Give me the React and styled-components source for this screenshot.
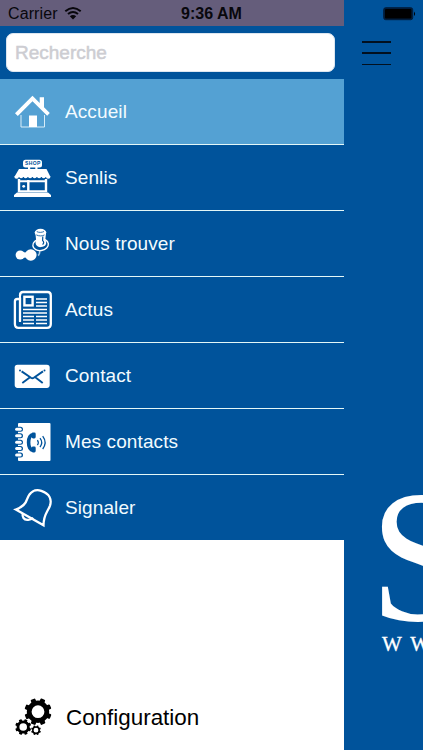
import { useState } from 'react'
import styled, { createGlobalStyle } from 'styled-components'

const GlobalStyle = createGlobalStyle`
  body {
    margin: 0;
    background: #00539b;
    font-family: "Liberation Sans", Arial, sans-serif;
  }
`

const Screen = styled.div`
  display: grid;
  grid-template-columns: 343.7px 1fr;
  height: 750px;
  overflow: hidden;
  background: #00539b;
`

const Drawer = styled.aside`
  display: flex;
  flex-direction: column;
  background: white;
`

const StatusBar = styled.div`
  display: flex;
  align-items: center;
  height: 26px;
  padding: 2px 0 0 8px;
  box-sizing: border-box;
  background: #655d7b;
  color: #08070c;
  font-size: 16px;
`

const Carrier = styled.span`
  width: 56px;
  letter-spacing: 0.1px;
`

const Wifi = styled.svg`
  width: 18px;
  height: 14px;
  margin-bottom: 2px;
`

const Time = styled.span`
  margin-left: 99px;
  font-weight: bold;
`

const SearchBox = styled.div`
  height: 53px;
  padding: 7px 8px 7px 6px;
  box-sizing: border-box;
  background: #00539b;
`

const SearchInput = styled.input`
  display: block;
  width: 329px;
  height: 39px;
  padding: 0 8px;
  box-sizing: border-box;
  border: 1px solid #dce6f0;
  border-radius: 7px;
  outline: none;
  background: white;
  font-family: inherit;
  font-size: 19px;

  &::placeholder {
    color: #cdcdd2;
    opacity: 1;
    -webkit-text-stroke: 0.5px #cdcdd2;
  }
`

const Menu = styled.nav`
  display: flex;
  flex-direction: column;
`

const MenuItem = styled.button`
  display: flex;
  align-items: center;
  height: 66px;
  padding: 0 0 0 13px;
  border: none;
  border-bottom: 1px solid #e4f7f7;
  background: ${props => props.$active ? '#54a1d3' : '#00539b'};
  color: #f2fbff;
  font-family: inherit;
  font-size: 19px;
  letter-spacing: 0.1px;
  text-align: left;
  cursor: pointer;

  &:last-child {
    height: 65px;
    border-bottom: none;
  }
`

const Icon = styled.svg`
  flex: none;
  width: 40px;
  height: 40px;
  margin-right: 12px;
`

const Settings = styled.button`
  display: flex;
  align-items: center;
  height: 66px;
  margin-top: auto;
  padding: 0 0 0 13px;
  border: none;
  background: white;
  color: black;
  font-family: inherit;
  font-size: 22.4px;
`

const SettingsLabel = styled.span`
  margin: 1px 0 0 1px;
`

const Page = styled.main`
  display: flex;
  flex-direction: column;
  overflow: hidden;
`

const PageStatus = styled.div`
  display: flex;
  height: 26px;
  padding: 7px 0 0 39.3px;
  box-sizing: border-box;
`

const Burger = styled.button`
  display: flex;
  flex-direction: column;
  justify-content: space-between;
  width: 29px;
  height: 24px;
  margin: 15px 0 0 18.3px;
  padding: 0;
  border: none;
  background: none;
`

const BurgerLine = styled.span`
  height: 1.5px;
  background: #02101f;
`

const Brand = styled.div`
  display: flex;
  flex-direction: column;
  margin: auto 0 95px 38.3px;
  color: white;
  font-family: "Liberation Serif", "Times New Roman", serif;
  white-space: nowrap;
`

const BrandName = styled.span`
  height: 147px;
  margin-left: -11.5px;
  font-size: 188px;
  line-height: 141px;
  transform: scaleX(0.95);
  transform-origin: left;
`

const BrandUrl = styled.span`
  height: 22px;
  font-size: 21px;
  line-height: 22px;
  letter-spacing: 8.5px;
  -webkit-text-stroke: 0.3px white;
`

const HomeIcon = () => (
  <Icon viewBox="0 0 40 40">
    <path d="M2 21.2 19.5 3.7l7.2 7.2V5.2H31v10L36.8 21l-2.6 2.8L19.5 9.2 4.8 23.9Z" fill="white" />
    <path d="M8 23v12h23.5V23" fill="none" stroke="#d8edf8" strokeWidth="1" />
    <path d="M16 23.5h8V35h-8Z" fill="white" />
  </Icon>
)

const SHOP_SIGN = { fontSize: 5, fontWeight: 'bold', letterSpacing: 0.4 }

const ShopIcon = () => (
  <Icon viewBox="0 0 40 40">
    <rect x="10" y="1.8" width="19" height="7.6" rx="2.5" fill="white" />
    <text x="12" y="7.3" fill="#00539b" {...SHOP_SIGN}>SHOP</text>
    <path d="M15 8h2.2v4H15ZM22.3 8h2.2v4h-2.2ZM6 11h27.5l4 8H1.3Z" fill="white" />
    <path d="M1.3 18.5h36.2a2.3 2.3 0 0 1-4.6 0a2.3 2.3 0 0 1-4.5 0a2.3 2.3 0 0 1-4.5 0a2.3 2.3 0 0 1-4.5 0a2.3 2.3 0 0 1-4.5 0a2.3 2.3 0 0 1-4.5 0a2.3 2.3 0 0 1-4.5 0a2.3 2.3 0 0 1-4.6 0Z" fill="white" />
    <path d="M6 21v13M33 21v13M15.3 22v12" stroke="white" strokeWidth="2.4" />
    <path d="M5 23.2h29M5 33.3h29" stroke="white" strokeWidth="2" />
    <path d="M1 39v-2l3-2.5h31l3 2.5v2Z" fill="white" />
    <circle cx="10.7" cy="28.3" r="1.4" fill="white" />
  </Icon>
)

const PinIcon = () => (
  <Icon viewBox="0 0 40 40">
    <path d="M25 31.5c2-1 2-3 1.5-6" fill="none" stroke="#a9cde8" strokeWidth="1.6" />
    <ellipse cx="27.6" cy="20.8" rx="7.8" ry="5.8" transform="rotate(-8 27.6 20.8)" fill="#00539b" stroke="white" strokeWidth="1.4" />
    <path d="M22.3 8.5l.8 7.5c-1.8 4 1 7.6 5 7.1 4.5-.4 6.4-3.6 4.2-7.4l.8-7.2Z" fill="white" />
    <path d="M29.8 12.5l-.2 4c1.4 1.2 1.5 2.7 0 4.2" fill="none" stroke="#00539b" strokeWidth="1.2" />
    <ellipse cx="27.5" cy="8.6" rx="5.8" ry="3.8" fill="white" />
    <path d="M23.8 7.6c2.2 1.1 5 1 7.2-.1M23.3 10.9c2.6 1.4 6.3 1.3 8.2 0" fill="none" stroke="#00539b" strokeWidth=".8" />
    <circle cx="7.2" cy="31" r="4.6" fill="white" />
    <path d="M9 27.8q4 1.5 6 0v6q-3-.6-7 .8Z" fill="white" />
    <circle cx="17.8" cy="31" r="5.8" fill="white" />
  </Icon>
)

const NewsIcon = () => (
  <Icon viewBox="0 0 40 40" fill="none" stroke="white">
    <path d="M7 6v-.5Q7 2 10 2h24.5Q37.8 2 37.8 5.5V34q0 3.8-3.8 3.8H5.5Q1.9 37.8 1.9 34V11.5Q1.9 9 4.3 9H7v22.5" strokeWidth="2.3" />
    <path d="M7 6v26" strokeWidth="2" />
    <rect x="11.4" y="6.8" width="8.2" height="8.6" strokeWidth="2.4" />
    <path d="M23 9h11M23 12.5h11M23 16h11M10 19.5h24M10 23h24M10 26.5h11M23 26.5h11M10 30h11M23 30h11M10 33.5h11M23 33.5h11" strokeWidth="1.4" />
  </Icon>
)

const MailIcon = () => (
  <Icon viewBox="0 0 40 40">
    <rect x="1.7" y="8.7" width="35" height="23.2" rx="2.8" fill="white" />
    <path d="M8.6 15.4 18 21.8q1.4.9 2.8 0L30 15.4M9.3 26.9l7.4-5.5M29.7 26.9l-7.1-5.5" fill="none" stroke="#00539b" strokeWidth="1.9" />
    <circle cx="7" cy="14.4" r="1" fill="#00539b" />
    <circle cx="31.5" cy="14.4" r="1" fill="#00539b" />
  </Icon>
)

const RINGS = [7.3, 13.7, 20.2, 26.6, 33]

const PhoneBookIcon = () => (
  <Icon viewBox="0 0 40 40">
    <rect x="5" y="1" width="32.5" height="38" rx="1" fill="white" />
    {RINGS.map(y => (
      <g key={y}>
        <path d={`M4 ${y}h3.5`} stroke="#00539b" strokeWidth="5" strokeLinecap="round" />
        <path d={`M3.6 ${y}h3.6`} stroke="white" strokeWidth="3" strokeLinecap="round" />
      </g>
    ))}
    <path d="M20.3 12.6c-3.3.6-4.7 3.2-4.7 7.9s1.4 7.3 4.7 7.9" fill="none" stroke="#00539b" strokeWidth="3.6" />
    <rect x="18.7" y="10.5" width="4" height="6" rx="1.4" fill="#00539b" />
    <rect x="18.7" y="24.5" width="4" height="6" rx="1.4" fill="#00539b" />
    <path d="M24.4 18.2q1.8 2.4 0 4.8M27 16.2q3.4 4.4 0 8.8M29.7 14.2q4.8 6.4 0 12.8" fill="none" stroke="#00539b" strokeWidth="1.3" />
  </Icon>
)

const BellIcon = () => (
  <Icon viewBox="0 0 40 40" fill="none" stroke="white" strokeWidth="2.3">
    <path d="M2.8 21.5q9.2-3.2 11.2-10.1C16.7 3.8 22 .7 28.3 2.8c8.3 2.8 10.7 8.6 8.7 14.8C34.2 25 30.7 26 30.5 37.3Z" strokeLinejoin="miter" />
    <path d="M9.7 25.5c-.6 3.8 1.2 6.1 4.6 6.4 2.7.3 4.6-.6 5.7-2.2" />
  </Icon>
)

// centre, radius, ring width and tooth size of each wheel
const GEARS = [
  { x: 25, y: 14.7, r: 8.8, ring: 4.8, tooth: 5 },
  { x: 10.2, y: 30, r: 5.2, ring: 2.8, tooth: 3 },
  { x: 23, y: 33.2, r: 3.2, ring: 1.6, tooth: 1.8 },
]

const GearsIcon = () => (
  <Icon viewBox="0 0 40 40">
    {GEARS.map(gear => (
      <g key={gear.x} transform={`translate(${gear.x} ${gear.y})`}>
        <circle r={gear.r} fill="none" stroke="black" strokeWidth={gear.ring} />
        {[22, 67, 112, 157, 202, 247, 292, 337].map(angle => (
          <rect
            key={angle}
            x={-gear.tooth / 2}
            y={-gear.r * 1.54}
            width={gear.tooth}
            height={gear.r * 0.5}
            rx={gear.tooth * 0.2}
            transform={`rotate(${angle})`}
          />
        ))}
      </g>
    ))}
  </Icon>
)

const items = [
  { label: 'Accueil', icon: HomeIcon },
  { label: 'Senlis', icon: ShopIcon },
  { label: 'Nous trouver', icon: PinIcon },
  { label: 'Actus', icon: NewsIcon },
  { label: 'Contact', icon: MailIcon },
  { label: 'Mes contacts', icon: PhoneBookIcon },
  { label: 'Signaler', icon: BellIcon },
]

const App = () => {
  const [search, setSearch] = useState('')
  const [active, setActive] = useState('Accueil')

  return (
    <>
      <GlobalStyle />
      <Screen>
        <Drawer>
          <StatusBar>
            <Carrier>Carrier</Carrier>
            <Wifi viewBox="0 0 18 14">
              <path d="M1.3 5.3q7.7-6.6 15.4 0M4 8.1q5-4.2 10 0" fill="none" stroke="#08070c" strokeWidth="2" />
              <path d="M5.8 10.2q3.2-2.5 6.4 0L9 13.4Z" fill="#08070c" />
            </Wifi>
            <Time>9:36 AM</Time>
          </StatusBar>
          <SearchBox>
            <SearchInput value={search} placeholder="Recherche" onChange={e => setSearch(e.target.value)} />
          </SearchBox>
          <Menu>
            {items.map(({ label, icon: ItemIcon }) => (
              <MenuItem key={label} $active={label === active} onClick={() => setActive(label)}>
                <ItemIcon />
                {label}
              </MenuItem>
            ))}
          </Menu>
          <Settings>
            <GearsIcon />
            <SettingsLabel>Configuration</SettingsLabel>
          </Settings>
        </Drawer>
        <Page>
          <PageStatus>
            <svg width="34" height="14" viewBox="0 0 34 14">
              <rect x=".7" y=".7" width="29" height="12" rx="2" fill="#001d3c" stroke="#001d3c" />
              <rect x="2" y="2" width="26.4" height="9.4" rx="1" fill="black" />
              <path d="M31 4.5q2.2 2.3 0 4.5Z" fill="black" />
            </svg>
          </PageStatus>
          <Burger aria-label="Menu">
            <BurgerLine />
            <BurgerLine />
            <BurgerLine />
          </Burger>
          <Brand>
            <BrandName>S</BrandName>
            <BrandUrl>WW</BrandUrl>
          </Brand>
        </Page>
      </Screen>
    </>
  )
}

export default App
